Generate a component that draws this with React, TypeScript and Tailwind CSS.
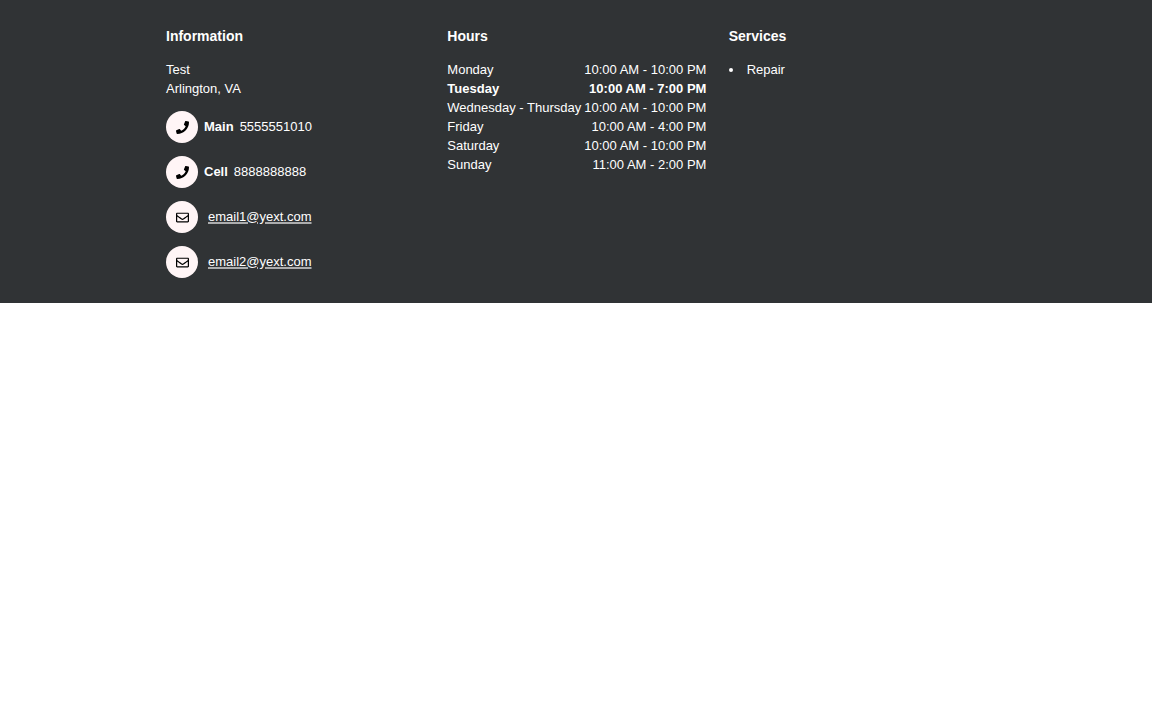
import { FaPhone, FaRegEnvelope } from "react-icons/fa";
import type { ReactNode } from "react";

const hours = [
  { day: "Monday", time: "10:00 AM - 10:00 PM" },
  { day: "Tuesday", time: "10:00 AM - 7:00 PM", today: true },
  { day: "Wednesday - Thursday", time: "10:00 AM - 10:00 PM" },
  { day: "Friday", time: "10:00 AM - 4:00 PM" },
  { day: "Saturday", time: "10:00 AM - 10:00 PM" },
  { day: "Sunday", time: "11:00 AM - 2:00 PM" },
];

const phones = [
  { label: "Main", number: "5555551010" },
  { label: "Cell", number: "8888888888" },
];

const emails = ["email1@yext.com", "email2@yext.com"];

function Badge({ children }: { children: ReactNode }) {
  return (
    <span className="flex size-8 shrink-0 items-center justify-center rounded-full bg-[#fff5f6] text-black">
      {children}
    </span>
  );
}

function Column({ title, children }: { title: string; children: ReactNode }) {
  return (
    <section>
      <h2 className="mb-3 text-[14px] leading-6 font-bold">{title}</h2>
      {children}
    </section>
  );
}

export default function App() {
  return (
    <div className="bg-[#303335] px-4 font-['Liberation_Sans',Arial,sans-serif] text-[13px] leading-[19px] text-white">
      <div className="mx-auto grid max-w-[820px] gap-x-6 gap-y-8 pt-6 pb-[25px] md:grid-cols-3">
        <Column title="Information">
          <address className="not-italic">
            <div>Test</div>
            <div>Arlington, VA</div>
          </address>
          <ul className="mt-[13px] flex flex-col gap-[13px] leading-5">
            {phones.map((phone) => (
              <li key={phone.label} className="flex items-center gap-1.5">
                <Badge>
                  <FaPhone size={13} aria-hidden="true" />
                </Badge>
                <span className="font-bold">{phone.label}</span>
                <span>{phone.number}</span>
              </li>
            ))}
            {emails.map((email) => (
              <li key={email} className="flex items-center gap-2.5">
                <Badge>
                  <FaRegEnvelope size={13} aria-hidden="true" />
                </Badge>
                <a
                  href={`mailto:${email}`}
                  className="underline decoration-white/60 decoration-2 underline-offset-1"
                >
                  {email}
                </a>
              </li>
            ))}
          </ul>
        </Column>
        <Column title="Hours">
          <table className="w-full whitespace-nowrap">
            <tbody>
              {hours.map((row) => (
                <tr key={row.day} className={row.today ? "font-bold" : "font-normal"}>
                  <td className="p-0">{row.day}</td>
                  <td className="py-0 pr-0 pl-[3px] text-right">{row.time}</td>
                </tr>
              ))}
            </tbody>
          </table>
        </Column>
        <Column title="Services">
          <ul className="list-inside list-disc">
            <li>Repair</li>
          </ul>
        </Column>
      </div>
    </div>
  );
}
